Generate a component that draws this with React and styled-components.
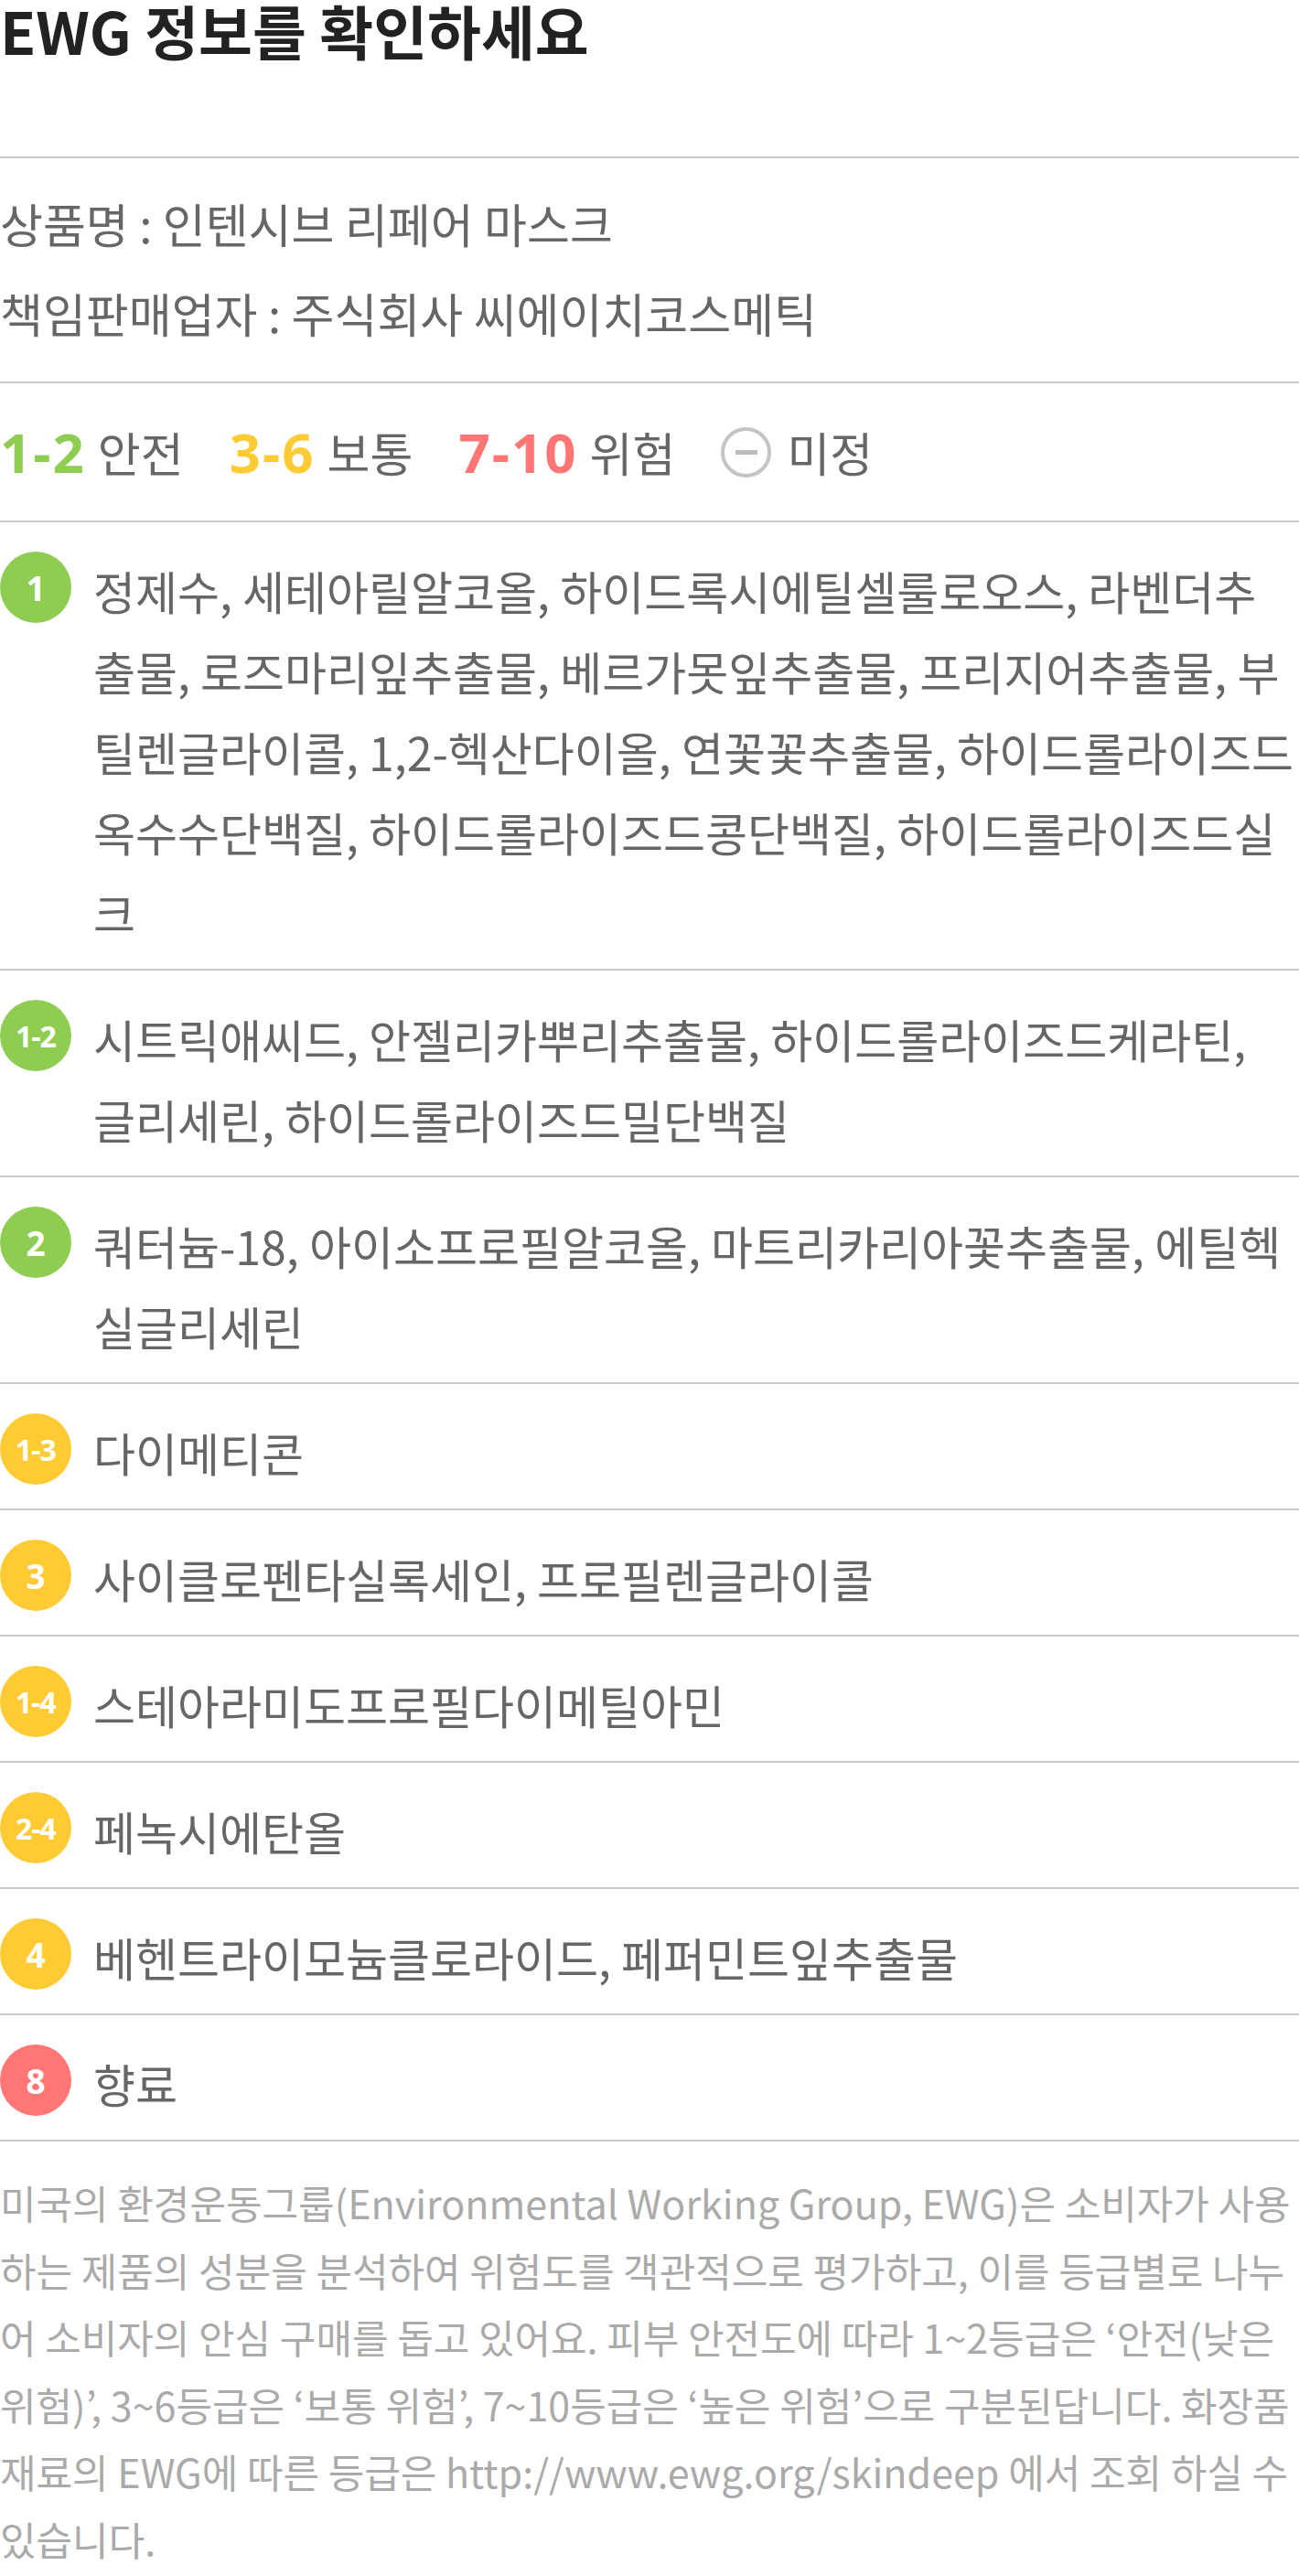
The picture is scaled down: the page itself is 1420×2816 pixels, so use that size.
import styled, { createGlobalStyle } from 'styled-components'

const KR = `"Noto Sans CJK KR", "Noto Sans", sans-serif`
const NUM = `"Noto Sans", "Noto Sans CJK KR", sans-serif`

const tones = {
  green: '#8fcd52',
  yellow: '#ffcb35',
  red: '#ff7674',
}

const GlobalStyle = createGlobalStyle`
  html, body {
    margin: 0;
    padding: 0;
    background: #fff;
  }
  body {
    font-family: ${KR};
  }
`

const Page = styled.div`
  width: 1420px;
  background: #fff;
`

const Header = styled.div`
  height: 171px;
  border-bottom: 2px solid #cbcbcb;
`

const Title = styled.h1`
  margin: 0;
  font-family: ${KR};
  font-size: 64px;
  font-weight: 700;
  line-height: 64px;
  color: #222;
`

const Info = styled.div`
  padding: 22px 0 26px;
  border-bottom: 2px solid #cbcbcb;
`

const InfoLine = styled.p`
  margin: 0;
  font-size: 51px;
  line-height: 98px;
  color: #666;
`

const Legend = styled.div`
  height: 150px;
  display: flex;
  align-items: center;
  gap: 50px;
  border-bottom: 2px solid #cbcbcb;
`

const LegendItem = styled.div`
  display: flex;
  align-items: center;
  gap: 13px;
`

const LegendRange = styled.span`
  font-family: ${NUM};
  font-weight: 700;
  font-size: 60px;
  letter-spacing: 2px;
  color: ${p => tones[p.$tone]};
`

const LegendLabel = styled.span`
  font-size: 51px;
  color: #666;
`

const NoneMark = styled.span`
  box-sizing: border-box;
  width: 55px;
  height: 55px;
  margin-right: 4px;
  border-radius: 50%;
  border: 4px solid #c4c4c4;
  display: flex;
  align-items: center;
  justify-content: center;

  &::after {
    content: '';
    width: 24px;
    height: 5px;
    background: #bdbdbd;
  }
`

const Row = styled.div`
  display: flex;
  align-items: flex-start;
  gap: 24px;
  padding: 30px 3.5px 18px 0;
  border-bottom: 2px solid #cbcbcb;
`

const Badge = styled.div`
  flex: none;
  width: 78px;
  height: 78px;
  margin-top: 2px;
  border-radius: 50%;
  background: ${p => tones[p.$tone]};
  color: #fff;
  display: flex;
  align-items: center;
  justify-content: center;
  font-family: ${NUM};
  font-weight: 700;
  font-size: ${p => (p.$range ? '32px' : '37px')};
  letter-spacing: ${p => (p.$range ? '-1px' : '0')};
`

const Names = styled.p`
  margin: 0;
  flex: 1;
  font-size: 50px;
  line-height: 88px;
  color: #666;
`

const Note = styled.p`
  margin: 0;
  padding: 30px 0 6px;
  font-size: 43px;
  line-height: 73.5px;
  color: #aaa;
`

const ingredients = [
  {
    grade: '1',
    tone: 'green',
    names:
      '정제수, 세테아릴알코올, 하이드록시에틸셀룰로오스, 라벤더추출물, 로즈마리잎추출물, 베르가못잎추출물, 프리지어추출물, 부틸렌글라이콜, 1,2-헥산다이올, 연꽃꽃추출물, 하이드롤라이즈드옥수수단백질, 하이드롤라이즈드콩단백질, 하이드롤라이즈드실크',
  },
  {
    grade: '1-2',
    tone: 'green',
    names: '시트릭애씨드, 안젤리카뿌리추출물, 하이드롤라이즈드케라틴, 글리세린, 하이드롤라이즈드밀단백질',
  },
  {
    grade: '2',
    tone: 'green',
    names: '쿼터늄-18, 아이소프로필알코올, 마트리카리아꽃추출물, 에틸헥실글리세린',
  },
  { grade: '1-3', tone: 'yellow', names: '다이메티콘' },
  { grade: '3', tone: 'yellow', names: '사이클로펜타실록세인, 프로필렌글라이콜' },
  { grade: '1-4', tone: 'yellow', names: '스테아라미도프로필다이메틸아민' },
  { grade: '2-4', tone: 'yellow', names: '페녹시에탄올' },
  { grade: '4', tone: 'yellow', names: '베헨트라이모늄클로라이드, 페퍼민트잎추출물' },
  { grade: '8', tone: 'red', names: '향료' },
]

const App = () => {
  return (
    <Page>
      <GlobalStyle />
      <Header>
        <Title>EWG 정보를 확인하세요</Title>
      </Header>

      <Info>
        <InfoLine>상품명 : 인텐시브 리페어 마스크</InfoLine>
        <InfoLine>책임판매업자 : 주식회사 씨에이치코스메틱</InfoLine>
      </Info>

      <Legend>
        <LegendItem>
          <LegendRange $tone="green">1-2</LegendRange>
          <LegendLabel>안전</LegendLabel>
        </LegendItem>
        <LegendItem>
          <LegendRange $tone="yellow">3-6</LegendRange>
          <LegendLabel>보통</LegendLabel>
        </LegendItem>
        <LegendItem>
          <LegendRange $tone="red">7-10</LegendRange>
          <LegendLabel>위험</LegendLabel>
        </LegendItem>
        <LegendItem>
          <NoneMark />
          <LegendLabel>미정</LegendLabel>
        </LegendItem>
      </Legend>

      {ingredients.map(item => (
        <Row key={item.grade}>
          <Badge $tone={item.tone} $range={item.grade.includes('-')}>
            {item.grade}
          </Badge>
          <Names>{item.names}</Names>
        </Row>
      ))}

      <Note>
        미국의 환경운동그룹(Environmental Working Group, EWG)은 소비자가 사용하는 제품의 성분을 분석하여 위험도를 객관적으로 평가하고, 이를 등급별로 나누어 소비자의 안심 구매를 돕고 있어요. 피부 안전도에 따라 1~2등급은 ‘안전(낮은 위험)’, 3~6등급은 ‘보통 위험’, 7~10등급은 ‘높은 위험’으로 구분된답니다. 화장품 재료의 EWG에 따른 등급은 http://www.ewg.org/skindeep 에서 조회 하실 수 있습니다.
      </Note>
    </Page>
  )
}

export default App
